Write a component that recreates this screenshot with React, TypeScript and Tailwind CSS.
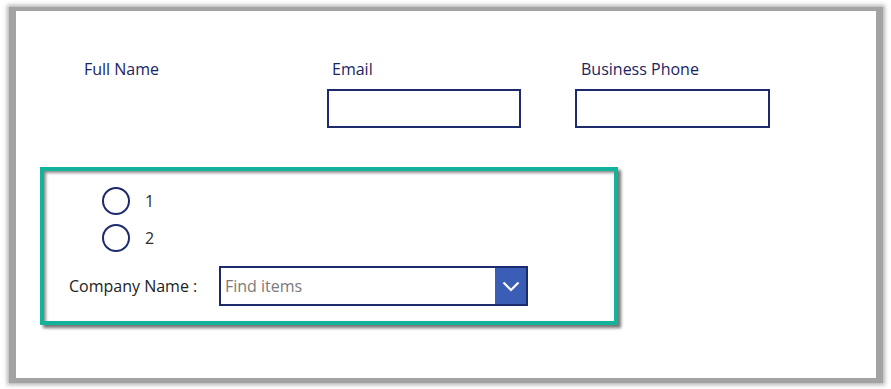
import React from "react";

const Radio: React.FC<{ label: string }> = ({ label }) => (
  <div className="flex items-center gap-[15px]">
    <span className="block w-[28px] h-[28px] rounded-full border-2 border-[#1d2a6e] bg-white" />
    <span className="text-[16px] text-[#2b2b2b]">{label}</span>
  </div>
);

const App: React.FC = () => {
  return (
    <div className="w-[891px] h-[389px] bg-white pl-[9px] pt-[7px] font-['Open_Sans',sans-serif]">
      <div className="w-[874px] h-[376px] bg-white border-l-[7px] border-t-[4px] border-r-[7px] border-b-[5px] border-[#a3a3a3] shadow-[0_0_4px_2px_rgba(150,150,150,0.7)]">
        {/* top fields */}
        <div className="flex pl-[63px] pt-[47px]">
          <div className="w-[248px] pl-[5px]">
            <p className="text-[16px] text-[#1a2464] leading-[22px]">Full Name</p>
          </div>
          <div className="w-[248px]">
            <p className="text-[16px] text-[#1a2464] leading-[22px] pl-[5px]">Email</p>
            <div className="mt-[9px] w-[194px] h-[39px] border-2 border-[#1d2a6e]" />
          </div>
          <div className="w-[248px]">
            <p className="text-[16px] text-[#1a2464] leading-[22px] pl-[6px]">Business Phone</p>
            <div className="mt-[9px] w-[195px] h-[39px] border-2 border-[#1d2a6e]" />
          </div>
        </div>

        {/* company card */}
        <div className="ml-[24px] mt-[39px] w-[578px] h-[158px] border-[4px] border-[#13b39b] shadow-[3px_3px_3px_rgba(0,0,0,0.55),inset_2px_2px_3px_rgba(0,0,0,0.45)]">
          <div className="flex flex-col gap-[9px] pl-[58px] pt-[16px]">
            <Radio label="1" />
            <Radio label="2" />
          </div>
          <div className="flex items-center mt-[14px] pl-[25px]">
            <span className="w-[150px] text-[16px] text-[#222]">Company Name :</span>
            <div className="flex w-[309px] h-[40px] border-2 border-[#1d2a6e]">
              <span className="flex-1 flex items-center pl-[4px] text-[16px] text-[#7a7a7a]">
                Find items
              </span>
              <span className="w-[31px] h-full bg-[#3a5db5] flex items-center justify-center">
                <svg width="18" height="11" viewBox="0 0 18 11" fill="none">
                  <path d="M1.5 1.5 L9 9 L16.5 1.5" stroke="white" strokeWidth="2.2" />
                </svg>
              </span>
            </div>
          </div>
        </div>
      </div>
    </div>
  );
};

export default App;
